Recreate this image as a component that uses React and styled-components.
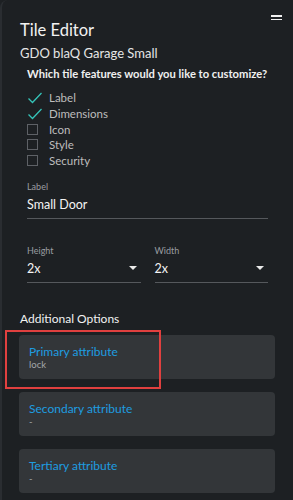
import React from "react";
import styled, { createGlobalStyle } from "styled-components";

const Global = createGlobalStyle`
  html, body {
    margin: 0;
    padding: 0;
    background: #1d2023;
  }
  body {
    font-family: Lato, "Open Sans", sans-serif;
    color: #e8e8e8;
  }
`;

const Frame = styled.div`
  position: relative;
  box-sizing: border-box;
  width: 293px;
  height: 500px;
  overflow: hidden;
  background: #1d2023;
  border-left: 2px solid #2a2d31;
  border-top-left-radius: 8px;
  padding: 18px 0 0 18px;
`;

const Header = styled.div`
  display: flex;
  justify-content: space-between;
  align-items: flex-start;
  padding-right: 11px;
`;

const Title = styled.h1`
  margin: 0;
  font-size: 16.5px;
  line-height: 24px;
  font-weight: 400;
  color: #f2f2f2;
`;

const Menu = styled.div`
  display: flex;
  flex-direction: column;
  gap: 2px;
  margin-top: -3px;
  span {
    display: block;
    width: 11px;
    height: 1.5px;
    background: #f0f0f0;
  }
`;

const Subtitle = styled.div`
  margin-top: 3px;
  font-size: 13px;
  line-height: 17px;
  color: #e6e6e6;
`;

const Body = styled.div`
  padding: 0 25px 0 7px;
`;

const Question = styled.div`
  margin-top: 4px;
  font-size: 11.2px;
  line-height: 16px;
  font-weight: 700;
  color: #f0f0f0;
  white-space: nowrap;
`;

const CheckList = styled.div`
  margin-top: 8px;
  display: flex;
  flex-direction: column;
`;

const CheckRow = styled.div`
  display: flex;
  align-items: center;
  height: 15.7px;
  font-size: 11.5px;
  color: #bdbdbd;
`;

const Box = styled.span`
  display: flex;
  align-items: center;
  justify-content: flex-start;
  width: 22px;
  i {
    display: block;
    box-sizing: border-box;
    width: 11px;
    height: 11px;
    border: 1.5px solid #5e6166;
  }
`;

const FieldLabel = styled.div`
  font-size: 9px;
  line-height: 12px;
  color: #9a9da1;
`;

const TextField = styled.div`
  margin-top: 11px;
  padding-top: 2px;
`;

const Value = styled.div`
  display: flex;
  justify-content: space-between;
  align-items: center;
  margin-top: 2px;
  height: 18px;
  font-size: 12.5px;
  color: #f4f4f4;
  border-bottom: 1.5px solid #55585c;
  padding-bottom: 5px;
`;

const Selects = styled.div`
  display: grid;
  grid-template-columns: 1fr 1fr;
  gap: 14px;
  margin-top: 26px;
`;

const Caret = styled.span`
  width: 0;
  height: 0;
  border-left: 4px solid transparent;
  border-right: 4px solid transparent;
  border-top: 4px solid #eaeaea;
  margin-right: 4px;
`;

const SectionTitle = styled.div`
  margin-top: 28px;
  margin-left: -7px;
  font-size: 12px;
  line-height: 16px;
  color: #f2f2f2;
`;

const Cards = styled.div`
  display: flex;
  flex-direction: column;
  gap: 13px;
  margin: 8px -7px 0 -8px;
`;

const Card = styled.div`
  box-sizing: border-box;
  height: 44px;
  background: #333639;
  border-radius: 4px;
  padding: 10px 10px 0 10px;
`;

const CardTitle = styled.div`
  font-size: 12px;
  line-height: 14px;
  color: #1e9de0;
`;

const CardValue = styled.div`
  font-size: 9.5px;
  line-height: 12px;
  color: #a3a6a9;
`;

const Highlight = styled.div`
  position: absolute;
  left: 3px;
  top: 330px;
  width: 156px;
  height: 59px;
  box-sizing: border-box;
  border: 2px solid #e0403f;
  pointer-events: none;
`;

const Check = () => (
  <svg width="16" height="12" viewBox="0 0 16 12">
    <path d="M1.5 6.5 L5.5 10.5 L14.5 1" fill="none" stroke="#35c3b8" strokeWidth="1.3" />
  </svg>
);

const features = [
  { name: "Label", on: true },
  { name: "Dimensions", on: true },
  { name: "Icon", on: false },
  { name: "Style", on: false },
  { name: "Security", on: false },
];

const options = [
  { title: "Primary attribute", value: "lock" },
  { title: "Secondary attribute", value: "-" },
  { title: "Tertiary attribute", value: "-" },
];

export default function App() {
  return (
    <>
      <Global />
      <Frame>
        <Header>
          <Title>Tile Editor</Title>
          <Menu>
            <span />
            <span />
          </Menu>
        </Header>
        <Subtitle>GDO blaQ Garage Small</Subtitle>
        <Body>
          <Question>Which tile features would you like to customize?</Question>
          <CheckList>
            {features.map((f) => (
              <CheckRow key={f.name}>
                <Box>{f.on ? <Check /> : <i />}</Box>
                {f.name}
              </CheckRow>
            ))}
          </CheckList>
          <TextField>
            <FieldLabel>Label</FieldLabel>
            <Value>Small Door</Value>
          </TextField>
          <Selects>
            <div>
              <FieldLabel>Height</FieldLabel>
              <Value>
                2x <Caret />
              </Value>
            </div>
            <div>
              <FieldLabel>Width</FieldLabel>
              <Value>
                2x <Caret />
              </Value>
            </div>
          </Selects>
          <SectionTitle>Additional Options</SectionTitle>
          <Cards>
            {options.map((o) => (
              <Card key={o.title}>
                <CardTitle>{o.title}</CardTitle>
                <CardValue>{o.value}</CardValue>
              </Card>
            ))}
          </Cards>
        </Body>
        <Highlight />
      </Frame>
    </>
  );
}
